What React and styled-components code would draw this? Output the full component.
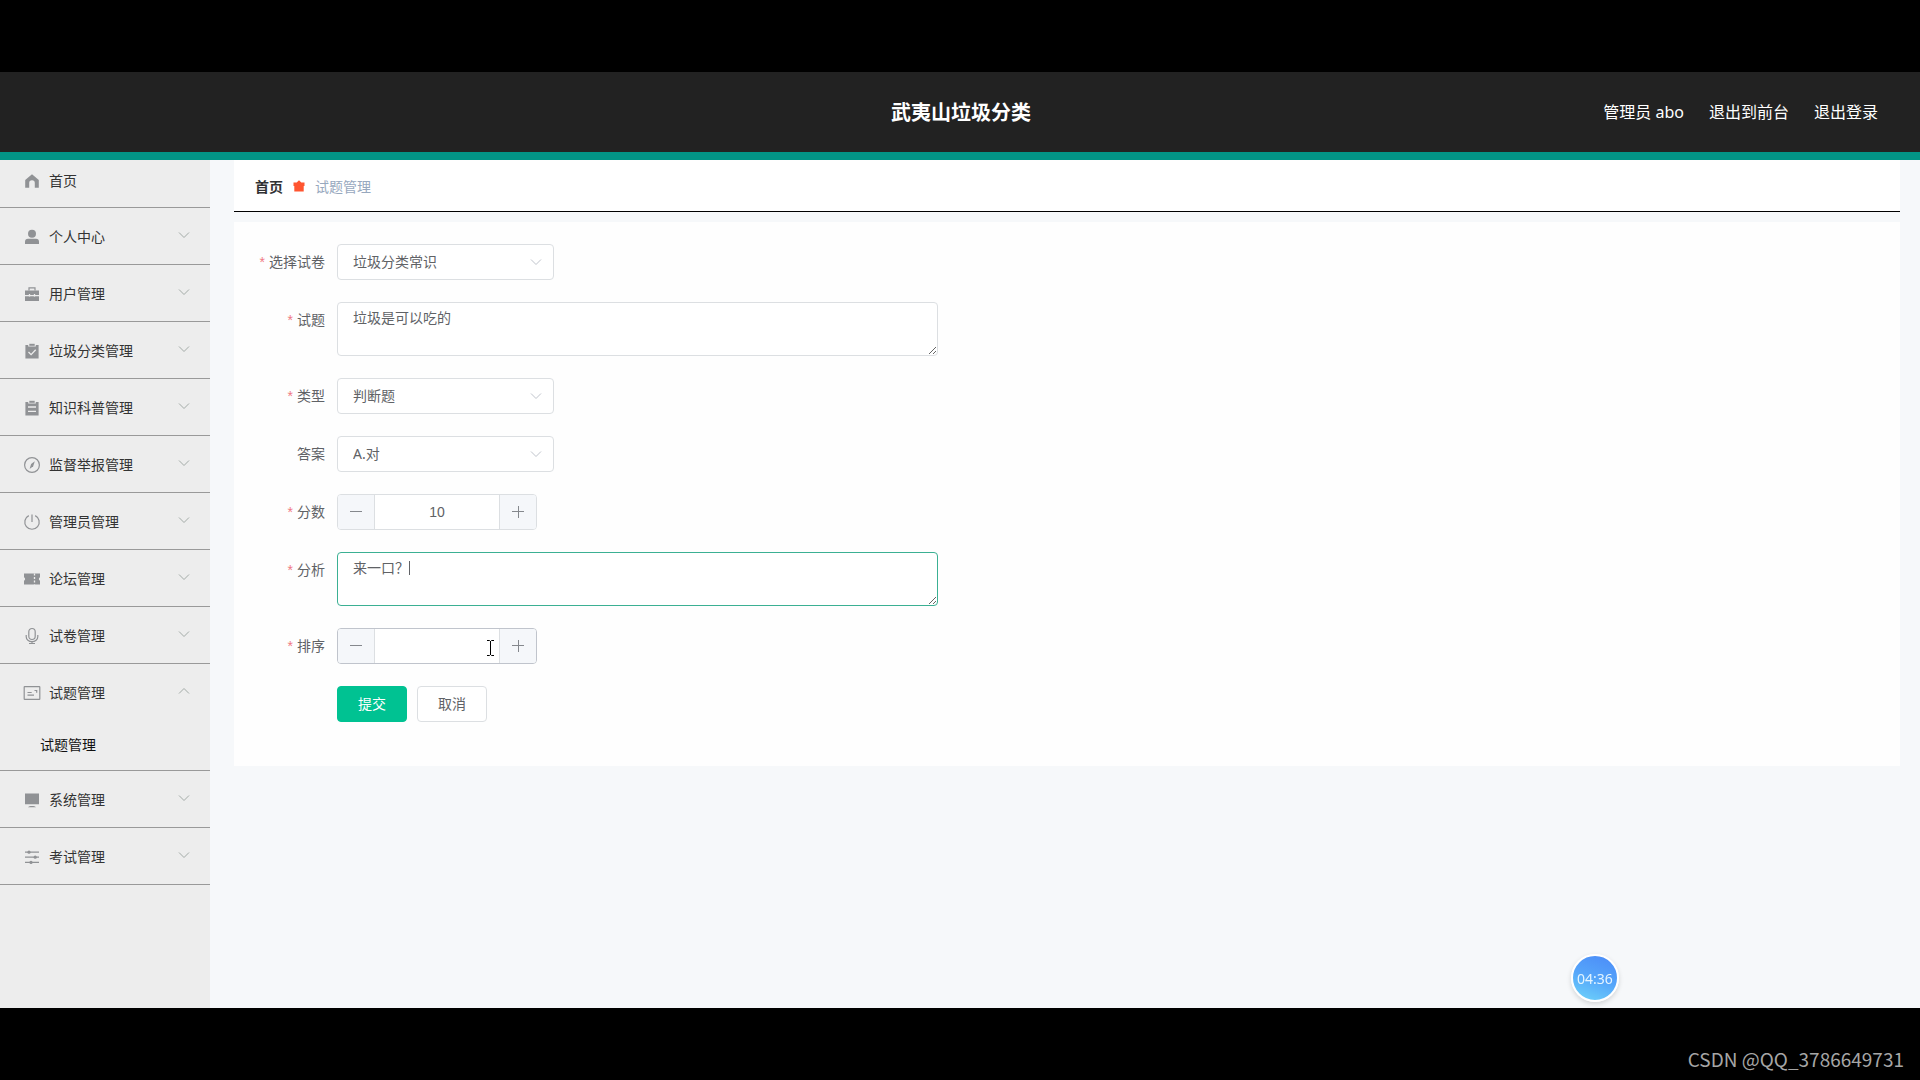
import React, { useState } from "react";
import styled, { createGlobalStyle } from "styled-components"

const GlobalStyle = createGlobalStyle`
    * {
        box-sizing: border-box;
    }
    body {
        margin: 0;
        background-color: #000;
    }
    body, button, input, select, textarea {
        font-family: "Noto Sans", "Noto Sans CJK SC", sans-serif;
        font-size: 14px;
    }
`

const Page = styled.div`
    display: flex;
    flex-direction: column;
    min-height: 100vh;
    padding-top: 72px;
`

const Header = styled.header`
    display: grid;
    grid-template-columns: 1fr auto 1fr;
    align-items: center;
    height: 88px;
    padding: 2px 42px 0 44px;
    background-color: #222;
    border-bottom: 8px solid #029486;
    color: #fff;
`

const Title = styled.h1`
    grid-column: 2;
    margin: 0;
    font-size: 20px;
    line-height: 28px;
`

const HeaderNav = styled.nav`
    display: flex;
    justify-content: flex-end;
    gap: 25px;
    padding-bottom: 2px;
    font-size: 16px;
    line-height: 24px;
    & a {
        color: #fff;
        text-decoration: none;
    }
`

const Body = styled.div`
    display: flex;
    flex: 1;
    background-color: #f6f8fa;
`

const Sidebar = styled.aside`
    width: 210px;
    flex-shrink: 0;
    background-color: #ededed;
`

const MenuGroup = styled.div`
    border-bottom: 1px solid #999;
`

const HomeLink = styled.a`
    display: flex;
    align-items: center;
    height: 47px;
    padding: 0 20px 8px;
    color: #333;
    text-decoration: none;
`

const MenuButton = styled.button`
    display: flex;
    align-items: center;
    width: 100%;
    height: 56px;
    padding: 0 20px;
    border: 0;
    background: none;
    color: #333;
    text-align: left;
    cursor: pointer;
`

const MenuIcon = styled.svg`
    width: 24px;
    height: 18px;
    margin: 2px 5px 0 0;
    flex-shrink: 0;
    fill: #909295;
    stroke: none;
    & .line {
        fill: none;
        stroke: #909295;
        stroke-width: 1.2;
    }
    & .cut {
        fill: none;
        stroke: #ededed;
        stroke-width: 1.3;
    }
`

const MenuArrow = styled.svg`
    width: 12px;
    height: 12px;
    margin: 0 0 2px auto;
    fill: none;
    stroke: #a3aba7;
    transform: ${props => props.$open ? "rotate(180deg)" : "none"};
`

const SubLink = styled.a`
    display: flex;
    align-items: center;
    height: 50px;
    padding: 0 20px 2px 40px;
    color: #111;
    text-decoration: none;
`

const Main = styled.main`
    flex: 1;
    min-width: 0;
    padding: 0 20px 0 24px;
`

const Breadcrumb = styled.nav`
    display: flex;
    align-items: center;
    height: 52px;
    padding: 0 21px;
    margin-bottom: 10px;
    background-color: #fff;
    border-bottom: 1px solid #000;
    color: #97a8be;
    & a {
        color: #303133;
        font-weight: 700;
        text-decoration: none;
    }
    & svg {
        width: 14px;
        height: 14px;
        margin: 0 9px;
        fill: #ff5530;
    }
`

const Card = styled.form`
    display: flex;
    flex-direction: column;
    gap: 22px;
    padding: 22px 22px 44px;
    background-color: #fefefe;
`

const FormRow = styled.div`
    display: flex;
    align-items: flex-start;
    padding-left: ${props => props.$indent ? "81px" : "0"};
    gap: ${props => props.$indent ? "10px" : "0"};
`

const Label = styled.label`
    display: flex;
    justify-content: flex-end;
    width: 81px;
    padding-right: 12px;
    flex-shrink: 0;
    line-height: 36px;
    color: #606266;
    white-space: nowrap;
    &::before {
        content: ${props => props.$required ? '"*"' : "none"};
        margin-right: 4px;
        color: #f07a84;
        font-family: "Liberation Sans", sans-serif;
    }
`

const SelectBox = styled.div`
    position: relative;
    width: 217px;
    & select {
        width: 100%;
        height: 36px;
        padding: 0 30px 2px 15px;
        appearance: none;
        border: 1px solid #dcdfe2;
        border-radius: 4px;
        background-color: #fff;
        color: #606266;
        outline: none;
    }
    & svg {
        position: absolute;
        top: 11px;
        right: 11px;
        width: 14px;
        height: 14px;
        fill: none;
        stroke: #c0c4cc;
        pointer-events: none;
    }
`

const TextBox = styled.div`
    position: relative;
    display: flex;
    width: 601px;
`

const TextArea = styled.textarea`
    width: 100%;
    height: 54px;
    padding: 4px 15px;
    border: 1px solid ${props => props.$active ? "#3bb093" : "#dcdfe2"};
    border-radius: 4px;
    background-color: #fff;
    color: #606266;
    line-height: 21px;
    resize: vertical;
    outline: none;
`

const NumberBox = styled.div`
    position: relative;
    display: flex;
    width: 200px;
    height: 36px;
    border: 1px solid ${props => props.$hover ? "#c0c4cc" : "#dcdfe2"};
    border-radius: 4px;
    overflow: hidden;
    & input {
        flex: 1;
        min-width: 0;
        padding: 0;
        border: 0;
        background-color: #fff;
        color: #606266;
        font-family: "Liberation Sans", sans-serif;
        text-align: center;
        appearance: textfield;
        outline: none;
    }
    & input::-webkit-inner-spin-button {
        appearance: none;
        margin: 0;
    }
`

const StepButton = styled.button`
    display: flex;
    align-items: center;
    justify-content: center;
    width: 37px;
    padding: 0;
    border: 0 solid #dcdfe2;
    border-left-width: ${props => props.$right ? "1px" : "0"};
    border-right-width: ${props => props.$right ? "0" : "1px"};
    background-color: #f5f7fa;
    & svg {
        width: 14px;
        height: 14px;
        stroke: #85888d;
    }
`

const MousePointer = styled.svg`
    position: absolute;
    top: 10px;
    right: 41px;
    width: 9px;
    height: 18px;
    fill: none;
    stroke: #000;
    pointer-events: none;
`

const TextCaret = styled.span`
    position: absolute;
    top: 9px;
    left: 72px;
    width: 1px;
    height: 14px;
    background-color: #606266;
    pointer-events: none;
`

const FormButton = styled.button`
    width: 70px;
    height: 36px;
    padding: 0 0 2px;
    border: 1px solid ${props => props.$primary ? "#00c292" : "#dcdfe2"};
    border-radius: 4px;
    background-color: ${props => props.$primary ? "#00c292" : "#fff"};
    color: ${props => props.$primary ? "#fff" : "#606266"};
`

const Timer = styled.div`
    position: fixed;
    right: 301px;
    bottom: 78px;
    display: flex;
    align-items: center;
    justify-content: center;
    width: 48px;
    height: 48px;
    border: 2px solid #fff;
    border-radius: 50%;
    background: linear-gradient(20deg, #6cd0fa 5%, #55a5fa 50%, #4c8df8 95%);
    box-shadow: 0 2px 5px rgba(0, 0, 0, 0.15);
    color: #e4f4ff;
`

const Footer = styled.footer`
    display: flex;
    align-items: flex-end;
    justify-content: flex-end;
    height: 72px;
    padding: 0 16px 9px;
    background-color: #000;
    color: #a6a6a6;
    font-family: "Noto Sans CJK SC", sans-serif;
    font-size: 19px;
    line-height: 24px;
`

const icons = {
    home: <path d="M9 2.2 2.2 8v7.8h4V11a2.8 2.8 0 0 1 5.6 0v4.8h4V8z" />,
    user: <><circle cx="9" cy="5.8" r="4" /><path d="M2 16v-2.2a3 3 0 0 1 3-3h8a3 3 0 0 1 3 3V16z" /></>,
    toolbox: <><path d="M2 5.5h14v4.6H2zM2 11.2h14V16H2z" /><path className="line" d="M6 5.5V2.8h6v2.7" /><path className="cut" d="M6.5 9v2.5M11.5 9v2.5" /></>,
    claim: <><path d="M2.4 3h2.8v1.6h7.6V3h2.8v13.4H2.4z" /><path d="M6.3 1.8h5.4v2H6.3z" /><path className="cut" d="m5.5 10 2.6 2.6 4.6-4.8" /></>,
    order: <><path d="M2.4 3h2.8v1.6h7.6V3h2.8v13.4H2.4z" /><path d="M6.3 1.8h5.4v2H6.3z" /><path className="cut" d="M5 8h8M5 12.3h8" /></>,
    discover: <><circle className="line" cx="9" cy="9" r="7.4" /><path d="m11.8 5.2-1.6 5.1L6.6 13l1.5-5z" /></>,
    power: <path className="line" d="M9 1.5V9M5.8 2.6a7.2 7.2 0 1 0 6.4 0" />,
    ticket: <><path d="M1 3.5h16v3.7a2 2 0 0 0 0 3.6v3.7H1v-3.7a2 2 0 0 0 0-3.6z" /><path className="cut" strokeDasharray="2 1.5" d="M11.5 3.5v11" /></>,
    microphone: <><rect className="line" x="5.8" y="1.5" width="6.4" height="11" rx="3.2" /><path className="line" d="M3.2 8v1.7a5.8 5 0 0 0 11.6 0V8M9 14.7v2M6 16.5h6" /></>,
    postcard: <><rect className="line" x="1.2" y="2.6" width="15.6" height="12.8" rx="0.5" /><path className="line" d="M4.5 8.5h4.2M4.5 11.2h6.5M11.5 6.5h2.2v2.2" /></>,
    platform: <path d="M2 2.5h14v10.8H2zM5 16.3c1-1.8 7-1.8 8 0z" />,
    operation: <><path className="line" d="M2 4.2h14M2 9.2h14M2 14.4h14" /><circle cx="6" cy="4.2" r="1.6" /><circle cx="12.2" cy="9.2" r="1.6" /><circle cx="8" cy="14.4" r="1.6" /></>,
}

const menus = [
    { icon: "user", name: "个人中心" },
    { icon: "toolbox", name: "用户管理" },
    { icon: "claim", name: "垃圾分类管理" },
    { icon: "order", name: "知识科普管理" },
    { icon: "discover", name: "监督举报管理" },
    { icon: "power", name: "管理员管理" },
    { icon: "ticket", name: "论坛管理" },
    { icon: "microphone", name: "试卷管理" },
    { icon: "postcard", name: "试题管理", children: ["试题管理"] },
    { icon: "platform", name: "系统管理" },
    { icon: "operation", name: "考试管理" },
]

const Icon = ({ name }) => <MenuIcon viewBox="0 0 18 18">{icons[name]}</MenuIcon>

const Select = ({ id, value, onChange, options }) => (
    <SelectBox>
        <select id={id} name={id} value={value} onChange={onChange}>
            {options.map(option => <option key={option} value={option}>{option}</option>)}
        </select>
        <svg viewBox="0 0 14 14"><path d="m2 4.5 5 5 5-5" /></svg>
    </SelectBox>
)

const NumberInput = ({ id, value, onChange, onStep, hover, children }) => (
    <NumberBox $hover={hover}>
        <StepButton type="button" onClick={() => onStep(id, -1)}>
            <svg viewBox="0 0 14 14"><path d="M1 6.5h12" /></svg>
        </StepButton>
        <input type="number" id={id} name={id} value={value} onChange={onChange} />
        <StepButton type="button" $right onClick={() => onStep(id, 1)}>
            <svg viewBox="0 0 14 14"><path d="M1 6.5h12M7.5 1v12" /></svg>
        </StepButton>
        {children}
    </NumberBox>
)

const App = () => {

    const [open, setOpen] = useState("试题管理")
    const [question, setQuestion] = useState({
        paper: "垃圾分类常识",
        title: "垃圾是可以吃的",
        type: "判断题",
        answer: "A.对",
        score: "10",
        analysis: "来一口？",
        sequence: ""
    })

    const handleChange = e => {
        setQuestion({
            ...question,
            [e.target.name]: e.target.value
        })
    }

    const handleStep = (name, step) => {
        setQuestion({
            ...question,
            [name]: String(Number(question[name]) + step)
        })
    }

    return (
        <>
            <GlobalStyle />
            <Page>
                <Header>
                    <Title>武夷山垃圾分类</Title>
                    <HeaderNav>
                        <span>管理员 abo</span>
                        <a href="#front">退出到前台</a>
                        <a href="#logout">退出登录</a>
                    </HeaderNav>
                </Header>
                <Body>
                    <Sidebar>
                        <MenuGroup>
                            <HomeLink href="#home"><Icon name="home" />首页</HomeLink>
                        </MenuGroup>
                        {menus.map(menu => (
                            <MenuGroup key={menu.name}>
                                <MenuButton type="button" onClick={() => setOpen(open === menu.name ? "" : menu.name)}>
                                    <Icon name={menu.icon} />
                                    {menu.name}
                                    <MenuArrow viewBox="0 0 12 12" $open={open === menu.name}><path d="m1 3.5 5 5 5-5" /></MenuArrow>
                                </MenuButton>
                                {open === menu.name && menu.children ? menu.children.map(child => (
                                    <SubLink key={child} href="#questions">{child}</SubLink>
                                )) : null}
                            </MenuGroup>
                        ))}
                    </Sidebar>
                    <Main>
                        <Breadcrumb>
                            <a href="#home">首页</a>
                            <svg viewBox="0 0 14 14"><path d="M1.5 3.5h3.2L7 1.2l2.3 2.3h3.2V7h-11zM2.3 7h9.4v5.6H2.3z" /></svg>
                            <span>试题管理</span>
                        </Breadcrumb>
                        <Card onSubmit={e => e.preventDefault()}>
                            <FormRow>
                                <Label htmlFor="paper" $required>选择试卷</Label>
                                <Select id="paper" value={question.paper} onChange={handleChange} options={["垃圾分类常识"]} />
                            </FormRow>
                            <FormRow>
                                <Label htmlFor="title" $required>试题</Label>
                                <TextBox>
                                    <TextArea id="title" name="title" value={question.title} onChange={handleChange} />
                                </TextBox>
                            </FormRow>
                            <FormRow>
                                <Label htmlFor="type" $required>类型</Label>
                                <Select id="type" value={question.type} onChange={handleChange} options={["判断题"]} />
                            </FormRow>
                            <FormRow>
                                <Label htmlFor="answer">答案</Label>
                                <Select id="answer" value={question.answer} onChange={handleChange} options={["A.对"]} />
                            </FormRow>
                            <FormRow>
                                <Label htmlFor="score" $required>分数</Label>
                                <NumberInput id="score" value={question.score} onChange={handleChange} onStep={handleStep} />
                            </FormRow>
                            <FormRow>
                                <Label htmlFor="analysis" $required>分析</Label>
                                <TextBox>
                                    <TextArea id="analysis" name="analysis" $active value={question.analysis} onChange={handleChange} />
                                    <TextCaret />
                                </TextBox>
                            </FormRow>
                            <FormRow>
                                <Label htmlFor="sequence" $required>排序</Label>
                                <NumberInput id="sequence" value={question.sequence} onChange={handleChange} onStep={handleStep} hover>
                                    <MousePointer viewBox="0 0 9 18"><path d="M1 1.5h2.5l1 1 1-1H8M4.5 2v14M1 16.5h2.5l1-1 1 1H8" /></MousePointer>
                                </NumberInput>
                            </FormRow>
                            <FormRow $indent>
                                <FormButton type="submit" $primary>提交</FormButton>
                                <FormButton type="button">取消</FormButton>
                            </FormRow>
                        </Card>
                    </Main>
                </Body>
                <Footer>CSDN @QQ_3786649731</Footer>
            </Page>
            <Timer>04:36</Timer>
        </>
    );
};
export default App;
